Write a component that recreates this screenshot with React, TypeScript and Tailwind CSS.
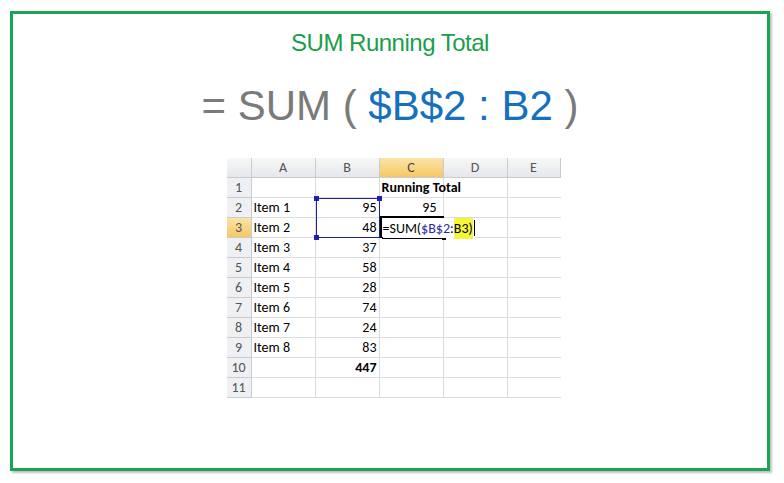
import React from "react";

const cols = [25, 64, 64, 64, 64, 53];
const rows: [string, string, string, boolean?][] = [
  ["", "", "Running Total"],
  ["Item 1", "95", "95"],
  ["Item 2", "48", ""],
  ["Item 3", "37", ""],
  ["Item 4", "58", ""],
  ["Item 5", "28", ""],
  ["Item 6", "74", ""],
  ["Item 7", "24", ""],
  ["Item 8", "83", ""],
  ["", "447", "", true],
  ["", "", ""],
];

export default function App() {
  const font = { fontFamily: "Calibri, Carlito, 'Liberation Sans', sans-serif" };
  return (
    <div className="w-[784px] h-[483px] bg-white pt-[11px] pl-[10px]" style={{ fontFamily: "'Liberation Sans', Arial, sans-serif" }}>
      <div className="w-[760px] h-[460px] border-[3px] border-[#1aa555] shadow-[2px_2px_2px_rgba(0,0,0,0.25)] flex flex-col items-center">
        <div className="mt-[14px] text-[24px] leading-[30px] text-[#1a9e4c] tracking-[-0.5px]">SUM Running Total</div>
        <div className="mt-[24px] text-[42px] leading-[48px] text-[#7a7a7a]">
          = SUM ( <span className="text-[#1570c0]">$B$2 : B2</span> )
        </div>
        <div className="relative mt-[28px] ml-[7px] text-[14px] text-black" style={font}>
          <div className="flex h-[20px] bg-gradient-to-b from-[#f8f8f8] to-[#e4e6ea] text-[#555]">
            {["", "A", "B", "C", "D", "E"].map((c, i) => (
              <div key={i} style={{ width: cols[i] }} className={`flex items-center justify-center border-r border-b border-[#c8ccd2] text-[14px] ${c === "C" ? "bg-gradient-to-b from-[#fbe4a6] to-[#f6c862] text-[#444]" : ""}`}>{c}</div>
            ))}
          </div>
          {rows.map((r, ri) => (
            <div key={ri} className="flex h-[20px]">
              <div style={{ width: cols[0] }} className={`flex items-center justify-center border-r border-b border-[#c8ccd2] text-[14px] text-[#555] ${ri === 2 ? "bg-gradient-to-b from-[#fbe4a6] to-[#f6c862]" : "bg-[#eef0f3]"}`}>{ri + 1}</div>
              <div style={{ width: cols[1] }} className="flex items-center px-[2px] border-r border-b border-[#dadcdd]">{r[0]}</div>
              <div style={{ width: cols[2] }} className={`flex items-center justify-end px-[2px] border-r border-b border-[#dadcdd] ${r[3] ? "font-bold" : ""}`}>{r[1]}</div>
              <div style={{ width: cols[3] }} className={`flex items-center px-[2px] border-r border-b border-[#dadcdd] ${ri === 0 ? "font-bold whitespace-nowrap overflow-visible" : "justify-end pr-[6px]"}`}>{r[2]}</div>
              <div style={{ width: cols[4] }} className="border-r border-b border-[#dadcdd]" />
              <div style={{ width: cols[5] }} className="border-b border-[#dadcdd]" />
            </div>
          ))}
          <div className="absolute left-[89px] top-[40px] w-[64px] h-[40px] border border-[#2020a0]" />
          <div className="absolute left-[87px] top-[38px] w-[5px] h-[5px] bg-[#2020b0]" />
          <div className="absolute left-[150px] top-[38px] w-[5px] h-[5px] bg-[#2020b0]" />
          <div className="absolute left-[87px] top-[77px] w-[5px] h-[5px] bg-[#2020b0]" />
          <div className="absolute left-[153px] top-[58px] w-[64px] h-[2px] bg-black" />
          <div className="absolute left-[153px] top-[60px] w-[2px] h-[20px] bg-black" />
          <div className="absolute left-[155px] top-[79px] w-[60px] h-[2px] bg-black" />
          <div className="absolute left-[215px] top-[78px] w-[4px] h-[4px] bg-black" />
          <div className="absolute left-[156px] top-[60px] h-[20px] flex items-center bg-white whitespace-nowrap">
            =SUM(<span className="text-[#2a2aa8]">$B$2</span>:<span className="bg-[#f5f53a]">B3)</span><span className="w-[1px] h-[16px] bg-black ml-[1px]" />
          </div>
        </div>
      </div>
    </div>
  );
}
